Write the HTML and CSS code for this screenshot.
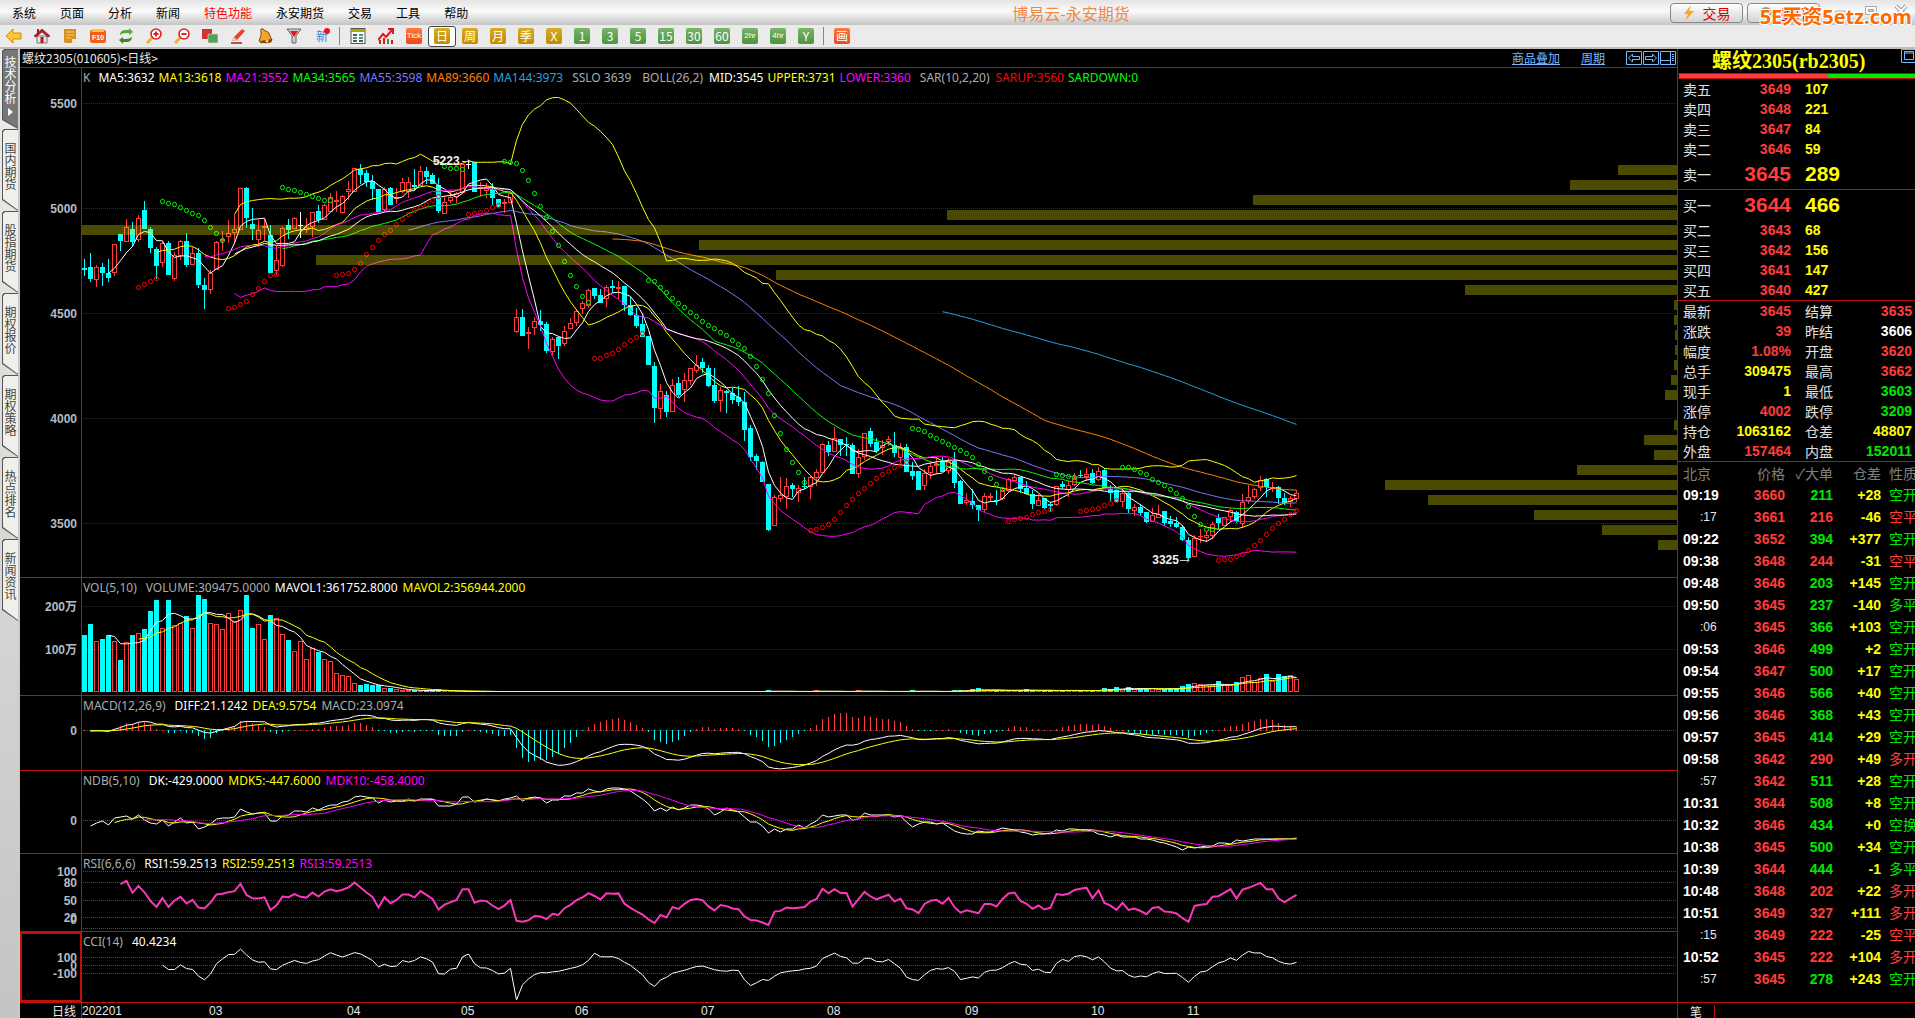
FILE: index.html
```html
<!DOCTYPE html>
<html lang="zh-CN">
<head>
    <meta charset="UTF-8">
    <meta name="viewport" content="width=device-width, initial-scale=1.0">
    <title>博易云-永安期货</title>
    <link rel="stylesheet" href="styles.css">
</head>
<body>
<div class="app">
    <header class="titlebar">
        <nav class="menu">
            <button>系统</button>
            <button>页面</button>
            <button>分析</button>
            <button>新闻</button>
            <button class="hot">特色功能</button>
            <button>永安期货</button>
            <button>交易</button>
            <button>工具</button>
            <button>帮助</button>
        </nav>
        <h1>博易云-永安期货</h1>
        <div class="title-actions">
            <button class="trade"><svg width="12" height="16" viewBox="0 0 12 16"><path d="M8 0L1 9h4L2 16 11 6H6z" fill="#f5a623"/></svg>交易</button>
            <button class="trade"><svg width="14" height="14" viewBox="0 0 14 14"><circle cx="7" cy="7" r="6" fill="#999"/></svg>委托</button>
            <div class="win-controls">
                <button aria-label="最小化"><svg width="14" height="14" viewBox="0 0 14 14"><rect x="2" y="7" width="9" height="4" fill="#fff" stroke="#aaa"/></svg></button>
                <button aria-label="最大化"><svg width="14" height="14" viewBox="0 0 14 14"><rect x="1.5" y="2.5" width="11" height="8" fill="#fff" stroke="#aaa"/><rect x="4.5" y="5.5" width="5" height="2" fill="#ccc" stroke="#aaa"/></svg></button>
                <button aria-label="关闭"><svg width="14" height="14" viewBox="0 0 14 14"><path d="M2 2l10 10M12 2L2 12" stroke="#999" stroke-width="4"/><path d="M2 2l10 10M12 2L2 12" stroke="#fff" stroke-width="2"/></svg></button>
            </div>
            <span class="watermark">5E天资5etz.com</span>
        </div>
    </header>

    <div class="toolbar">
        <button aria-label="后退"><svg viewBox="0 0 16 16"><path d="M0 8l7-7v4h8v6H7v4z" fill="#ffc830" stroke="#d08c10"/></svg></button>
        <button aria-label="首页"><svg viewBox="0 0 16 16"><path d="M3 8h10v7H3z" fill="#e8e4e0" stroke="#777"/><path d="M0 8l8-7 8 7-2 1-6-5-6 5z" fill="#c01828" stroke="#7a1018" stroke-width=".6"/><path d="M3 1h2v4L3 6z" fill="#a01820"/><path d="M6.500 9h3v6h-3z" fill="#b01828"/></svg></button>
        <button aria-label="笔记"><svg viewBox="0 0 16 16"><path d="M2 1h12v10l-4 4H3q-1.500-1-1-3z" fill="#d89020"/><path d="M10 15l4-4h-4z" fill="#fff0b0"/><path d="M4 4h8M4 7h8M4 10h5" stroke="#f6cc60"/></svg></button>
        <button aria-label="F10"><svg viewBox="0 0 16 16"><rect x="0" y="2" width="16" height="13" rx="2" fill="#f06018"/><path d="M2 1h12v3H2z" fill="#ffc040"/><text x="8" y="12" class="ico-text">F10</text></svg></button>
        <button aria-label="刷新"><svg viewBox="0 0 16 16"><path d="M2 7q0-5 6-5h3V0l4 4-4 3V5H8Q4 5 2 7z" fill="#58a838"/><path d="M14 9q0 5-6 5H5v2l-4-4 4-3v2h3q4 0 6-2z" fill="#388828"/></svg></button>
        <button aria-label="放大"><svg viewBox="0 0 16 16"><path d="M6 10l-5 5" stroke="#f0b020" stroke-width="3"/><circle cx="10" cy="6" r="5" fill="#fff" stroke="#e02020" stroke-width="1.600"/><path d="M7.500 6h5M10 3.500v5" stroke="#e02020" stroke-width="2"/></svg></button>
        <button aria-label="缩小"><svg viewBox="0 0 16 16"><path d="M6 10l-5 5" stroke="#f0b020" stroke-width="3"/><circle cx="10" cy="6" r="5" fill="#fff" stroke="#e02020" stroke-width="1.600"/><path d="M7.500 6h5" stroke="#e02020" stroke-width="2"/></svg></button>
        <button aria-label="叠加"><svg viewBox="0 0 16 16"><rect x="0" y="1" width="10" height="10" fill="#d83030"/><rect x="6" y="6" width="10" height="9" rx="1" fill="#58a058" stroke="#d8e8d8" stroke-width=".6"/></svg></button>
        <button aria-label="画线"><svg viewBox="0 0 16 16"><path d="M2 13l2-4 8-8 3 2-8 9z" fill="#f04028"/><path d="M2 13l2-4 3 3z" fill="#f8c898"/><path d="M1 15h11" stroke="#b01818" stroke-width="1.500"/></svg></button>
        <button aria-label="预警"><svg viewBox="0 0 16 16"><path d="M3 1q2-1 3 1 6 2 6 6l2 4-11 3-2-2q3-5 2-12z" fill="#f0a828" stroke="#884010"/><path d="M2 13l12-2q1 3-3 4-7 1-9-2z" fill="#884010"/><circle cx="9" cy="13" r="1.500" fill="#ffd860"/></svg></button>
        <button aria-label="筛选"><svg viewBox="0 0 16 16"><path d="M1 1h14l-5 7v7H6V8z" fill="#ccc" stroke="#666"/><path d="M4 3h8L8 9z" fill="#e81818"/></svg></button>
        <button aria-label="新" class="new"><span>新</span><svg viewBox="0 0 6 6"><circle cx="3" cy="3" r="3" fill="#f01010"/></svg></button>
        <i class="sep"></i>
        <button aria-label="报价"><svg viewBox="0 0 16 16"><rect x="1" y=".5" width="14" height="15" fill="#fff" stroke="#555"/><path d="M1 1h14v3H1z" fill="#b8a000"/><path d="M3 7h4M3 13h4M9 13h4" stroke="#222" stroke-width="1.500"/><path d="M9 7h4M3 10h4M9 10h4" stroke="#088040" stroke-width="1.500"/></svg></button>
        <button aria-label="走势"><svg viewBox="0 0 16 16"><path d="M1 16v-4h2v4zM5 16v-6h2v6z" fill="#d81818"/><path d="M9 16v-5h2v5z" fill="#28a028"/><path d="M13 16v-4h2v4z" fill="#d81818"/><path d="M0 12l5-6 3 3 6-7M10 1h5v5" fill="none" stroke="#e01818" stroke-width="2"/></svg></button>
        <button><span class="chip red tiny">Tick</span></button>
        <button class="selected"><span class="chip gold">日</span></button>
        <button><span class="chip gold">周</span></button>
        <button><span class="chip gold">月</span></button>
        <button><span class="chip gold">季</span></button>
        <button><span class="chip gold">X</span></button>
        <button><span class="chip green">1</span></button>
        <button><span class="chip green">3</span></button>
        <button><span class="chip green">5</span></button>
        <button><span class="chip green">15</span></button>
        <button><span class="chip green">30</span></button>
        <button><span class="chip green">60</span></button>
        <button><span class="chip green tiny">2hr</span></button>
        <button><span class="chip green tiny">4hr</span></button>
        <button><span class="chip green">Y</span></button>
        <i class="sep"></i>
        <button><span class="chip red">画</span></button>
    </div>

    <div class="workspace">
        <nav class="side-tabs">
            <button class="active"><span>技术分析</span><svg width="5" height="8" viewBox="0 0 5 8"><path d="M0 0l5 4-5 4z" fill="#fff"/></svg></button>
            <button><span>国内期货</span></button>
            <button><span>股指期货</span></button>
            <button><span>期权报价</span></button>
            <button><span>期权策略</span></button>
            <button><span>热点排名</span></button>
            <button><span>新闻资讯</span></button>
        </nav>

        <main class="charts">
            <div class="chart-head">
                <span>螺纹2305(010605)&lt;日线&gt;</span>
                <div class="chart-links">
                    <a href="#overlay">商品叠加</a>
                    <a href="#period">周期</a>
                    <div class="nav-boxes">
                        <button aria-label="向左"><svg width="16" height="14" viewBox="0 0 16 14"><path d="M.5.5h15v13H.5zM2.500 7l4-4v2.500h7v3h-7V11z"/></svg></button>
                        <button aria-label="向右"><svg width="16" height="14" viewBox="0 0 16 14"><path d="M.5.5h15v13H.5zM13.500 7l-4-4v2.500h-7v3h7V11z"/></svg></button>
                        <button aria-label="布局"><svg width="16" height="14" viewBox="0 0 16 14"><path d="M.5.5h15v13H.5zM10.500.5v13M.5 9.500h10M12 3.500h2M12 5.500h2M12 7.500h2M12 9.500h2"/></svg></button>
                    </div>
                </div>
            </div>

            <section class="panel">
                <svg class="axis" id="axis-main"></svg>
                <div class="view">
                    <svg class="plot" id="plot-main"></svg>
                    <p class="legend tight"><span class="grey first">K</span><span class="white">MA5:3632</span><span class="yellow">MA13:3618</span><span class="magenta">MA21:3552</span><span class="green">MA34:3565</span><span class="violet">MA55:3598</span><span class="orange">MA89:3660</span><span class="blue">MA144:3973</span><span class="grey group">SSLO 3639</span><span class="grey group">BOLL(26,2)</span><span class="white">MID:3545</span><span class="yellow">UPPER:3731</span><span class="magenta">LOWER:3360</span><span class="grey group">SAR(10,2,20)</span><span class="red">SARUP:3560</span><span class="green">SARDOWN:0</span></p>
                </div>
            </section>
            <section class="panel">
                <svg class="axis" id="axis-vol"></svg>
                <div class="view">
                    <svg class="plot" id="plot-vol"></svg>
                    <p class="legend"><span class="grey first">VOL(5,10)</span><span class="grey">VOLUME:309475.0000</span><span class="white">MAVOL1:361752.8000</span><span class="yellow">MAVOL2:356944.2000</span></p>
                </div>
            </section>
            <section class="panel">
                <svg class="axis" id="axis-macd"></svg>
                <div class="view">
                    <svg class="plot" id="plot-macd"></svg>
                    <p class="legend"><span class="grey first">MACD(12,26,9)</span><span class="white">DIFF:21.1242</span><span class="yellow">DEA:9.5754</span><span class="grey">MACD:23.0974</span></p>
                </div>
            </section>
            <section class="panel">
                <svg class="axis" id="axis-ndb"></svg>
                <div class="view">
                    <svg class="plot" id="plot-ndb"></svg>
                    <p class="legend"><span class="grey first">NDB(5,10)</span><span class="white">DK:-429.0000</span><span class="yellow">MDK5:-447.6000</span><span class="magenta">MDK10:-458.4000</span></p>
                </div>
            </section>
            <section class="panel">
                <svg class="axis" id="axis-rsi"></svg>
                <div class="view">
                    <svg class="plot" id="plot-rsi"></svg>
                    <p class="legend"><span class="grey first">RSI(6,6,6)</span><span class="white">RSI1:59.2513</span><span class="yellow">RSI2:59.2513</span><span class="magenta">RSI3:59.2513</span></p>
                </div>
            </section>
            <section class="panel focused">
                <svg class="axis" id="axis-cci"></svg>
                <div class="view">
                    <svg class="plot" id="plot-cci"></svg>
                    <p class="legend"><span class="grey first">CCI(14)</span><span class="white">40.4234</span></p>
                </div>
            </section>
            <section class="panel time">
                <span class="period">日线</span>
                <svg class="plot" id="plot-time"></svg>
            </section>
        </main>

        <aside class="quote">
            <div class="quote-head">
                <h2>螺纹2305(rb2305)</h2>
                <button aria-label="窗口"><svg width="16" height="14" viewBox="0 0 16 14"><path d="M.5.5h15v13H.5zM3.500 2.500h9v8h-9zM3.500 4h9"/></svg></button>
            </div>
            <div class="ratio"><i></i></div>
            <table class="book">
                <tbody>
                    <tr><th>卖五</th><td class="up">3649</td><td class="yellow">107</td></tr>
                    <tr><th>卖四</th><td class="up">3648</td><td class="yellow">221</td></tr>
                    <tr><th>卖三</th><td class="up">3647</td><td class="yellow">84</td></tr>
                    <tr><th>卖二</th><td class="up">3646</td><td class="yellow">59</td></tr>
                    <tr class="best"><th>卖一</th><td class="up">3645</td><td class="yellow">289</td></tr>
                </tbody>
            </table>
            <table class="book">
                <tbody>
                    <tr class="best"><th>买一</th><td class="up">3644</td><td class="yellow">466</td></tr>
                    <tr><th>买二</th><td class="up">3643</td><td class="yellow">68</td></tr>
                    <tr><th>买三</th><td class="up">3642</td><td class="yellow">156</td></tr>
                    <tr><th>买四</th><td class="up">3641</td><td class="yellow">147</td></tr>
                    <tr><th>买五</th><td class="up">3640</td><td class="yellow">427</td></tr>
                </tbody>
            </table>
            <table class="stats">
                <tbody>
                    <tr><th>最新</th><td class="up">3645</td><th>结算</th><td class="up">3635</td></tr>
                    <tr><th>涨跌</th><td class="up">39</td><th>昨结</th><td class="white">3606</td></tr>
                    <tr><th>幅度</th><td class="up">1.08%</td><th>开盘</th><td class="up">3620</td></tr>
                    <tr><th>总手</th><td class="yellow">309475</td><th>最高</th><td class="up">3662</td></tr>
                    <tr><th>现手</th><td class="yellow">1</td><th>最低</th><td class="down">3603</td></tr>
                    <tr><th>涨停</th><td class="up">4002</td><th>跌停</th><td class="down">3209</td></tr>
                    <tr><th>持仓</th><td class="yellow">1063162</td><th>仓差</th><td class="yellow">48807</td></tr>
                    <tr><th>外盘</th><td class="up">157464</td><th>内盘</th><td class="down">152011</td></tr>
                </tbody>
            </table>
            <div class="trades-wrap">
                <table class="trades">
                    <thead>
                        <tr><th>北京</th><th>价格</th><th>✓大单</th><th>仓差</th><th>性质</th></tr>
                    </thead>
                    <tbody id="trades"></tbody>
                </table>
            </div>
            <div class="quote-tabs"><button>笔</button></div>
        </aside>
    </div>
</div>
<script src="chart.js"></script>
</body>
</html>
```

FILE: styles.css
```css
* {
    box-sizing: border-box;
}
body {
    margin: 0;
    background: #000;
    color: #e8e8e8;
    font-family: "Noto Sans CJK SC", "Liberation Sans", sans-serif;
    font-size: 12px;
}
button {
    margin: 0;
    padding: 0;
    border: 0;
    background: none;
    color: inherit;
    font: inherit;
    cursor: pointer;
}
h1, h2, p {
    margin: 0;
}
.app {
    display: flex;
    flex-direction: column;
    height: 100vh;
    min-height: 700px;
    overflow: hidden;
}

/* title bar */
.titlebar {
    display: flex;
    align-items: center;
    flex: none;
    height: 25px;
    background: linear-gradient(#e4e4e4, #fafafa 45%, #c4c4c4);
    color: #000;
}
.menu {
    display: flex;
    gap: 24px;
    padding-left: 12px;
}
.menu .hot {
    color: #f00;
}
.titlebar h1 {
    flex: 1;
    padding-left: 4px;
    text-align: center;
    font-size: 16px;
    font-weight: normal;
    line-height: 24px;
    color: #f08848;
}
.title-actions {
    display: flex;
    align-items: center;
    gap: 4px;
    position: relative;
    width: 245px;
}
.trade {
    display: flex;
    align-items: center;
    justify-content: center;
    gap: 8px;
    width: 73px;
    height: 20px;
    border: 1px solid #888;
    border-radius: 4px;
    background: linear-gradient(#fff, #d4d4d4);
    color: #d80000;
    font-size: 14px;
    line-height: 18px;
}
.win-controls {
    display: flex;
    gap: 16px;
    padding: 0 0 4px 10px;
}
.win-controls button {
    height: 14px;
}
.watermark {
    position: absolute;
    right: 3px;
    top: 0;
    color: #ff6a00;
    font-family: "Open Sans", "Noto Sans CJK SC", sans-serif;
    font-size: 20px;
    font-weight: bold;
    line-height: 28px;
    text-shadow: 1px 1px #fff, -1px -1px #fff, 1px -1px #fff, -1px 1px #fff;
}

/* toolbar */
.toolbar {
    display: flex;
    align-items: center;
    flex: none;
    height: 24px;
    background: #ebebeb;
    border-bottom: 2px solid #c0bcbc;
}
.toolbar button {
    display: flex;
    align-items: center;
    justify-content: center;
    width: 28px;
    height: 21px;
}
.toolbar svg {
    width: 16px;
    height: 16px;
}
.toolbar .selected {
    border: 1px solid #444;
    border-radius: 3px;
    background: #fff;
}
.ico-text {
    fill: #fff;
    font: bold 7px "Liberation Sans", sans-serif;
    text-anchor: middle;
}
.toolbar .new {
    position: relative;
    color: #3888e0;
    line-height: 20px;
}
.toolbar .new svg {
    position: absolute;
    top: 2px;
    right: 6px;
    width: 6px;
    height: 6px;
}
.sep {
    width: 5px;
    height: 18px;
    margin-left: 3px;
    border-left: 1px solid #888;
}
.chip {
    width: 16px;
    height: 16px;
    border-radius: 2px;
    color: #fff;
    font-size: 12px;
    line-height: 16px;
    text-align: center;
}
.chip.tiny {
    font-family: "Liberation Sans", sans-serif;
    font-size: 8px;
}
.gold { background: linear-gradient(#d8ac28, #c08c00); }
.chip.green { background: linear-gradient(#78b468, #4c9440); color: #fff; }
.chip.red { background: linear-gradient(#ff7840, #f04818); color: #fff; }

/* workspace */
.workspace {
    display: flex;
    flex: 1;
    min-height: 0;
}
.side-tabs {
    flex: none;
    width: 20px;
    padding-left: 2px;
    border-right: 2px solid #d0c8c4;
    background: linear-gradient(#ececec, #c4c4c4);
}
.side-tabs button {
    display: flex;
    flex-direction: column;
    align-items: center;
    gap: 4px;
    position: relative;
    width: 16px;
    height: 82px;
    padding-top: 13px;
    background: #555;
    clip-path: polygon(0 2px, 2px 0, 100% 0, 100% 100%, 0 71px);
    color: #444;
    line-height: 16px;
}
.side-tabs button::before {
    content: "";
    position: absolute;
    inset: 1px 0 1px 1px;
    background: #f0f0ea;
    clip-path: polygon(0 2px, 2px 0, 100% 0, 100% 100%, 0 69px);
}
.side-tabs .active {
    height: 80px;
    padding-top: 7px;
    color: #fff;
}
.side-tabs .active::before {
    background: #777;
}
.side-tabs span,
.side-tabs svg {
    position: relative;
}
.side-tabs span {
    writing-mode: vertical-rl;
}

.charts {
    display: grid;
    flex: 1;
    min-width: 0;
    grid-template-rows:
        19px
        minmax(0, 510fr)
        minmax(0, 118fr)
        minmax(0, 75fr)
        minmax(0, 83fr)
        minmax(0, 78fr)
        minmax(0, 71fr)
        15px;
}
.chart-head {
    display: flex;
    justify-content: space-between;
    align-items: center;
    padding-left: 2px;
    border-bottom: 1px solid #c01008;
    line-height: 18px;
}
.chart-links {
    display: flex;
    align-items: center;
    gap: 21px;
}
.chart-links a {
    color: #78b8ff;
}
.nav-boxes {
    display: flex;
    gap: 1px;
    padding-right: 1px;
}
.nav-boxes button {
    height: 14px;
}
.nav-boxes path,
.quote-head path {
    fill: none;
    stroke: #78b8ff;
}
.panel {
    display: grid;
    grid-template-columns: 62px minmax(0, 1fr);
    grid-template-rows: minmax(0, 1fr);
    border-bottom: 1px solid #c01008;
}
.axis {
    width: 100%;
    height: 100%;
    border-right: 1px solid #c01008;
    fill: #b4bcc4;
    font: bold 12px "Liberation Sans", "Noto Sans CJK SC", sans-serif;
    text-anchor: end;
}
.focused .axis {
    outline: 2px solid #c01008;
    outline-offset: -2px;
}
.view {
    display: grid;
    grid-template-rows: minmax(0, 1fr);
}
.view > * {
    grid-area: 1 / 1;
}
.plot {
    display: block;
    width: 100%;
    height: 100%;
}
.legend {
    display: flex;
    gap: 5px;
    align-self: start;
    padding-left: 1px;
    z-index: 1;
    font-family: "Noto Sans", sans-serif;
    line-height: 19px;
    white-space: pre;
}
.legend.tight {
    gap: 4px;
}
.legend .first {
    padding-right: 4px;
}
.legend .group {
    padding: 0 2px 0 5px;
}
.grey { color: #a8acb0; }
.white { color: #fff; }
.yellow { color: #ff0; }
.magenta { color: #f0f; }
.green { color: #0f0; }
.violet { color: #7878ff; }
.orange { color: #ff8000; }
.blue { color: #28a0e0; }
.red { color: #f00; }
.up { color: #ff3c3c; }
.down { color: #00e800; }

.time {
    border-bottom: 0;
    line-height: 15px;
}
.period {
    padding-right: 5px;
    border-right: 1px solid #c01008;
    text-align: right;
}
.time text {
    fill: #e8e8e8;
    font: 12px "Liberation Sans", sans-serif;
}

/* shapes in the plots */
.line {
    fill: none;
    stroke-width: 1;
    vector-effect: non-scaling-stroke;
}
.line.bold {
    stroke-width: 2;
}
.grid {
    stroke: #900;
    stroke-dasharray: 1 1;
    shape-rendering: crispEdges;
}
.grid.bright {
    stroke: #d01008;
}
.bar {
    shape-rendering: crispEdges;
}
.profile {
    fill: #ff0;
    fill-opacity: 0.29;
}
.mark {
    fill: #f0f0f0;
    font: bold 12px "Liberation Sans", sans-serif;
}

/* quote panel */
.quote {
    display: flex;
    flex-direction: column;
    flex: none;
    width: 238px;
    border-left: 1px solid #c01008;
    overflow: hidden;
}
.quote-head {
    display: flex;
    flex: none;
    justify-content: space-between;
    height: 25px;
    padding-left: 34px;
    border-bottom: 1px solid #c01008;
}
.quote-head h2 {
    color: #ff0;
    font: bold 20px/24px "Liberation Serif", "Noto Sans CJK SC", serif;
    white-space: nowrap;
}
.quote-head button {
    flex: none;
    width: 14px;
    height: 16px;
    overflow: hidden;
}
.ratio {
    flex: none;
    height: 5px;
    border-bottom: 1px solid #c01008;
    border-left: 1px solid #000;
    background: #00e800;
}
.ratio i {
    display: block;
    width: 63%;
    height: 4px;
    background: #ff3c3c;
}
.quote table {
    table-layout: fixed;
    width: 100%;
    border-collapse: collapse;
}
.quote tr {
    height: 20px;
}
.quote th,
.quote td {
    padding: 0;
    white-space: nowrap;
    line-height: 20px;
}
.quote th {
    color: #e0e0e0;
    font-size: 14px;
    font-weight: normal;
    text-align: left;
}
.quote td {
    font-family: "Liberation Sans", "Noto Sans CJK SC", sans-serif;
    font-size: 14px;
    font-weight: bold;
    text-align: right;
}
.book {
    border-bottom: 1px solid #c01008;
}
.book th {
    width: 50px;
    padding-left: 5px;
}
.book td:nth-child(2) {
    width: 63px;
}
.book td:nth-child(3) {
    padding-left: 14px;
    text-align: left;
}
.quote .best {
    height: 30px;
}
.book .best td {
    font-size: 21px;
}
.stats {
    border-bottom: 1px solid #c01008;
}
.stats th:nth-child(1) {
    width: 40px;
    padding-left: 5px;
}
.stats td:nth-child(2) {
    width: 73px;
}
.stats th:nth-child(3) {
    width: 50px;
    padding-left: 14px;
}
.stats td:nth-child(4) {
    padding-right: 3px;
}
.trades-wrap {
    flex: 1;
    min-height: 0;
    overflow: hidden;
}
.trades tr {
    height: 22px;
}
.quote .trades th {
    color: #808080;
    text-align: right;
}
.quote .trades th:nth-child(1),
.quote .trades td:nth-child(1) {
    width: 50px;
    padding-left: 5px;
    text-align: left;
}
.trades th:nth-child(2) { width: 57px; }
.trades th:nth-child(3) { width: 48px; }
.trades th:nth-child(4) { width: 48px; }
.quote .trades th:nth-child(5),
.quote .trades td:nth-child(5) {
    padding-left: 8px;
    text-align: left;
    font-weight: normal;
}
.quote .trades td.sec {
    padding-left: 22px;
    font-size: 12px;
    font-weight: normal;
}
.quote-tabs {
    flex: none;
    height: 16px;
    border-top: 1px solid #c01008;
}
.quote-tabs button {
    width: 37px;
    height: 15px;
    margin-top: -1px;
    border: 1px solid #c01008;
    border-top-color: #000;
    border-left: 0;
    border-radius: 0 0 3px 3px;
    line-height: 12px;
}
```

FILE: chart.js
```javascript
const NS = 'http://www.w3.org/2000/svg';
const WIDTH = 1595;
const STEP = 6;
const RED = '#ff3c3c';
const CYAN = '#00ffff';

// daily bars in chart units: open, close, high, low
const bars = [
    [200,202,191,208],[199,211,185,214],[212,199,197,219],[199,205,195,218],[205,210,191,214],
    [205,176,176,208],[166,173,166,183],[174,159,151,174],[161,174,154,179],[172,150,147,174],
    [142,161,133,161],[161,180,159,185],[181,198,179,211],[195,175,174,199],[175,207,173,207],
    [211,187,184,213],[188,173,172,192],[173,197,165,199],[197,185,179,197],[185,217,180,220],
    [217,222,210,241],[222,205,202,226],[202,174,173,202],[173,171,163,183],[169,165,152,175],
    [165,161,147,174],[162,120,120,162],[120,150,119,160],[156,161,140,172],[172,162,152,179],
    [160,158,152,173],[167,205,157,205],[203,192,178,207],[198,160,159,199],[157,162,151,171],
    [161,150,149,161],[157,157,144,170],[162,159,150,165],[159,144,144,169],[143,152,137,155],
    [152,137,136,152],[144,129,125,144],[134,132,123,144],[145,128,127,146],[124,121,113,132],
    [124,100,100,124],[101,107,96,116],[105,114,102,119],[113,121,107,132],[121,144,121,144],
    [142,121,119,144],[120,137,119,137],[131,129,120,136],[124,114,110,125],[124,114,109,130],
    [117,119,101,122],[118,103,98,118],[103,109,99,116],[107,116,105,116],[117,143,110,145],
    [146,134,128,146],[133,129,122,135],[129,125,124,135],[125,96,96,125],[96,96,92,101],
    [94,124,94,124],[121,119,114,129],[123,120,115,130],[121,130,115,137],[131,139,131,139],
    [136,134,131,145],[135,125,125,135],[264,249,241,265],[249,268,241,268],[266,264,259,281],
    [260,253,249,267],[253,257,242,263],[256,283,254,285],[284,271,269,287],[269,278,269,291],
    [276,263,258,278],[261,255,250,261],[255,243,241,258],[241,235,233,246],[238,222,221,240],
    [220,228,220,231],[227,235,221,235],[231,219,217,239],[218,220,212,225],[221,219,213,231],
    [218,237,218,243],[237,247,229,248],[247,258,240,260],[256,269,247,269],[268,297,268,297],
    [298,340,294,355],[341,323,316,351],[327,344,323,349],[344,317,311,344],[315,327,309,329],
    [322,312,305,334],[313,300,300,317],[303,297,287,305],[294,300,290,305],[300,318,297,319],
    [317,333,300,335],[333,322,319,344],[323,325,322,345],[325,332,320,336],[329,334,318,338],
    [334,362,324,373],[360,389,357,393],[388,393,386,402],[394,414,393,414],[416,462,416,463],
    [458,429,427,458],[431,427,409,434],[429,418,410,441],[417,421,415,429],[425,420,417,434],
    [418,419,409,421],[419,409,408,431],[410,404,401,418],[405,376,375,405],[377,384,373,388],
    [384,370,359,384],[371,377,371,388],[376,377,369,388],[377,406,375,406],[406,389,381,410],
    [389,365,365,392],[363,376,360,379],[374,383,370,385],[380,377,372,387],[374,371,368,378],
    [377,385,364,389],[390,379,375,395],[379,404,376,404],[403,408,394,412],[403,422,403,422],
    [418,405,401,422],[405,398,394,411],[398,396,389,406],[393,404,389,404],[403,393,390,406],
    [393,415,384,420],[413,436,412,436],[435,432,425,437],[433,437,421,441],[437,442,437,453],
    [442,428,425,444],[430,428,425,434],[432,433,422,437],[431,422,420,432],[423,411,410,424],
    [413,409,406,413],[409,421,409,425],[420,426,413,426],[426,436,422,441],[438,432,426,438],
    [430,440,430,441],[436,438,434,444],[437,418,418,438],[416,419,413,421],[422,417,413,429],
    [417,410,405,418],[407,408,402,410],[409,406,400,413],[405,415,401,416],[412,403,399,413],
    [402,420,400,420],[421,425,417,433],[422,434,421,434],[434,425,422,439],[425,441,424,445],
    [443,439,436,448],[439,445,436,448],[444,454,444,455],[454,447,440,454],[450,446,437,450],
    [443,455,443,458],[453,456,448,459],[455,459,449,460],[459,472,457,473],[472,490,469,492],
    [489,470,467,489],[469,468,461,475],[470,467,464,474],[468,456,454,471],[450,455,446,461],
    [458,449,449,458],[449,442,440,454],[444,453,443,455],[456,434,426,460],[433,429,417,436],
    [429,421,420,431],[420,412,408,423],[411,419,410,429],[421,419,414,424],[419,430,418,436],
    [430,435,425,437],[434,430,428,439],[431,425,422,434]
];

// bar heights of the volume panel
const volume = [
    57,68,51,53,57,51,32,50,57,59,63,81,92,64,92,67,69,76,64,97,93,69,68,63,79,71,82,97,64,68,
    53,77,74,58,52,41,51,33,44,40,33,31,19,17,16,9,7,8,7,7,4,4,3,2,2,2,2,2,2,3
];
while (volume.length < 148) volume.push(1);
[114, 122, 129, 138, 145, 146, 147].forEach(i => { volume[i] = 2; });
volume.push(
    3,4,2,2,2,2,2,2,2,3,2,2,2,2,2,2,2,2,2,2,2,2,
    4,3,5,3,5,3,4,4,4,3,3,4,4,
    6,8,9,8,7,7,11,7,7,10,15,17,10,14,18,11,18,16,17,13
);

// DK line, first value belongs to the second bar
const dk = [
    55,52,50,54,47,46,45,48,44,49,52,53,49,55,51,47,52,51,58,56,53,48,47,47,46,38,41,43,42,42,
    50,50,45,44,40,40,41,37,39,36,34,34,31,30,26,25,26,27,32,29,31,30,30,28,30,28,28,28,35,35,
    35,33,26,26,31,30,28,29,30,28,27,25,30,27,26,27,32,29,29,25,25,22,22,18,20,21,18,17,17,18,
    20,24,28,33,40,37,40,36,39,37,34,34,35,38,44,41,37,39,41,46,51,51,55,62,58,61,58,58,54,57,
    53,50,44,46,45,44,44,49,48,42,44,44,44,44,46,45,51,56,53,51,51,53,52,56,60,62,63,63,60,61,
    61,59,57,58,59,61,62,64,63,63,62,59,60,58,58,59,59,60,63,64,66,64,66,66,66,68,68,69,71,72,
    74,76,79,76,77,76,75,75,72,72,73,69,70,69,68,68,68,68,68,68,68,67
];

// SAR dots: index of the first bar, colour, heights
const sar = [
    [9, '#f00', [219,216,213,210]],
    [13, '#0f0', [133,135,136,139,142,145,147,152,159,165,172]],
    [24, '#f00', [240,239,236,233,226,220,213,207,206]],
    [33, '#0f0', [119,121,122,124,126,128,130,132,132]],
    [42, '#f00', [207,206,205,201,195,186,179,172,166,162,156,151,146,142,139,136,132,128]],
    [60, '#0f0', [98,100,100,101]],
    [64, '#f00', [146,145,144,142,139,137]],
    [70, '#0f0', [93,94,95,102,112,125,138,149,163,177,193,207,218,228,234]],
    [85, '#f00', [290,290,287,285,281,276,272,269,265]],
    [94, '#0f0', [212,213,219,224,230,235,239,244,248,253,257,260,264,267,272,276,280,288,298,311,325,347,365,381,394,404,414]],
    [121, '#f00', [462,461,459,456,451,444,437,431,425,420,415,410,406,403,399,397,394]],
    [138, '#0f0', [360,361,363,367,370,373,376,379,382,385,389,396,403,410,416,421]],
    [154, '#f00', [453,451,450,449,446,444,443,441]],
    [162, '#0f0', [406,407,408,409]],
    [166, '#f00', [443,442,441,440,437,435,432]],
    [173, '#0f0', [399,399,401,404,406,411,414,417,421,425,430,438,448,456,461,461]],
    [189, '#f00', [492,491,491,488,486,482,477,472,466,460,455,451,446,442]]
];

// volume by price: top, length
const profile = [
    [97,59],[112,107],[127,424],[142,730],[157,1595],[172,978],[187,1361],[202,901],[217,212],
    [232,3],[247,3],[262,2],[277,2],[292,3],[307,6],[322,12],[352,3],[367,33],[382,23],[397,100],
    [412,292],[427,249],[442,143],[457,75],[472,19]
];

const trades = [
    ['09:19', 3660, 211, '+28', '空开'], [':17', 3661, 216, '-46', '空平'],
    ['09:22', 3652, 394, '+377', '空开'], ['09:38', 3648, 244, '-31', '空平'],
    ['09:48', 3646, 203, '+145', '空开'], ['09:50', 3645, 237, '-140', '多平'],
    [':06', 3645, 366, '+103', '空开'], ['09:53', 3646, 499, '+2', '空开'],
    ['09:54', 3647, 500, '+17', '空开'], ['09:55', 3646, 566, '+40', '空开'],
    ['09:56', 3646, 368, '+43', '空开'], ['09:57', 3645, 414, '+29', '空开'],
    ['09:58', 3642, 290, '+49', '多开'], [':57', 3642, 511, '+28', '空开'],
    ['10:31', 3644, 508, '+8', '空开'], ['10:32', 3646, 434, '+0', '空换'],
    ['10:38', 3645, 500, '+34', '空开'], ['10:39', 3644, 444, '-1', '多平'],
    ['10:48', 3648, 202, '+22', '多开'], ['10:51', 3649, 327, '+111', '多开'],
    [':15', 3649, 222, '-25', '空平'], ['10:52', 3645, 222, '+104', '多开'],
    [':57', 3645, 278, '+243', '空开']
];

function add(parent, name, attrs, text) {
    const el = document.createElementNS(NS, name);
    for (const key in attrs) el.setAttribute(key, attrs[key]);
    if (text !== undefined) el.textContent = text;
    parent.appendChild(el);
    return el;
}

function canvas(id, height) {
    return add(document.getElementById(id), 'svg', {
        width: '100%', height: '100%', viewBox: `0 0 ${WIDTH} ${height}`, preserveAspectRatio: 'none'
    });
}

function axis(id, height, labels) {
    const svg = document.getElementById(id);
    labels.forEach(([y, text]) => {
        add(svg, 'text', { x: 57, y: (y / height * 100) + '%', dy: '4' }, text);
    });
}

function grid(svg, rows, bright) {
    rows.forEach(y => {
        add(svg, 'line', { x1: 1, x2: WIDTH, y1: y, y2: y, class: bright ? 'grid bright' : 'grid' });
    });
}

function line(svg, values, color, cls = 'line') {
    const points = [];
    values.forEach((v, i) => {
        if (v !== null) points.push(`${i * STEP + 2.5},${v.toFixed(1)}`);
    });
    add(svg, 'polyline', { points: points.join(' '), stroke: color, class: cls });
}

function ma(values, n) {
    return values.map((v, i) => {
        if (i < n - 1 || values[i - n + 1] === null) return null;
        return values.slice(i - n + 1, i + 1).reduce((a, b) => a + b, 0) / n;
    });
}

function ema(values, n) {
    let last = values[0];
    return values.map(v => (last = last + (v - last) * 2 / (n + 1)));
}

const closes = bars.map(b => b[1]);
const price = y => 5500 - (y - 35.5) / 0.21;

function drawMain() {
    const svg = canvas('plot-main', 509);
    grid(svg, [35.5, 140.5, 245.5, 350.5, 455.5]);

    bars.forEach(([open, close, high, low], i) => {
        const x = i * STEP;
        const top = Math.min(open, close);
        const size = Math.abs(open - close);
        const color = open === close ? '#fff' : close > open ? CYAN : RED;
        if (high < top) add(svg, 'rect', { x: x + 2, y: high, width: 1, height: top - high, fill: color, class: 'bar' });
        if (low > top + size) add(svg, 'rect', { x: x + 2, y: top + size, width: 1, height: low - top - size, fill: color, class: 'bar' });
        if (close > open) {
            add(svg, 'rect', { x: x, y: top, width: 5, height: size, fill: CYAN, class: 'bar' });
        } else if (size > 1) {
            add(svg, 'rect', { x: x + 0.5, y: top + 0.5, width: 4, height: size - 1, fill: 'none', stroke: color, class: 'bar' });
        } else {
            add(svg, 'rect', { x: x, y: top, width: 5, height: 1, fill: color, class: 'bar' });
        }
    });

    const mid = ma(closes, 26);
    const dev = mid.map((m, i) => {
        if (m === null) return null;
        const part = closes.slice(i - 25, i + 1);
        return Math.sqrt(part.reduce((a, c) => a + (c - m) * (c - m), 0) / 26);
    });
    line(svg, ma(closes, 5), '#fff');
    line(svg, ma(closes, 13), '#ff0');
    line(svg, ma(closes, 21), '#f0f');
    line(svg, ma(closes, 34), '#0f0');
    line(svg, ma(closes, 55), '#7878ff');
    line(svg, ma(closes, 89), '#ff8000');
    line(svg, ma(closes, 144), '#28a0e0');
    line(svg, mid, '#fff');
    line(svg, mid.map((m, i) => m === null ? null : m - 2 * dev[i]), '#ff0');
    line(svg, mid.map((m, i) => m === null ? null : m + 2 * dev[i]), '#f0f');

    sar.forEach(([start, color, dots]) => {
        dots.forEach((y, k) => {
            add(svg, 'ellipse', { cx: (start + k) * STEP + 2.5, cy: y + 0.5, rx: 2, ry: 2.2, stroke: color, class: 'line' });
        });
    });
    profile.forEach(([y, w]) => {
        add(svg, 'rect', { x: WIDTH - w, y: y, width: w, height: 10, class: 'profile' });
    });

    // highest and lowest price
    add(svg, 'path', { d: 'M380 93.500h8M386 91.500l2 2-2 2M1098 492.500h9M1105 490.500l2 2-2 2', stroke: '#ccc', class: 'line' });
    const outer = document.getElementById('plot-main');
    add(outer, 'text', { x: '22%', y: '19.1%', class: 'mark' }, '5223');
    add(outer, 'text', { x: '67.1%', y: '97.4%', class: 'mark' }, '3325');
    axis('axis-main', 509, [[35.5, 5500], [140.5, 5000], [245.5, 4500], [350.5, 4000], [455.5, 3500]]);
}

function drawVolume() {
    const svg = canvas('plot-vol', 117);
    const base = 114;
    grid(svg, [28.5, 71.5]);
    volume.forEach((h, i) => {
        const down = bars[i][1] > bars[i][0];
        if (down || h < 3) {
            add(svg, 'rect', { x: i * STEP, y: base - h, width: 5, height: h, fill: down ? CYAN : RED, class: 'bar' });
        } else {
            add(svg, 'rect', { x: i * STEP + 0.5, y: base - h + 0.5, width: 4, height: h - 1, fill: 'none', stroke: RED, class: 'bar' });
        }
    });
    line(svg, ma(volume, 5).map(v => v === null ? null : base - v + 0.5), '#fff');
    line(svg, ma(volume, 10).map(v => v === null ? null : base - v + 0.5), '#ff0');
    axis('axis-vol', 117, [[28.5, '200万'], [71.5, '100万']]);
}

function drawMacd() {
    const svg = canvas('plot-macd', 74);
    const zero = 34.5;
    const scale = 0.185;
    const values = closes.map(price);
    const slow = ema(values, 26);
    const diff = ema(values, 12).map((v, i) => v - slow[i]);
    const dea = ema(diff, 9);
    grid(svg, [zero], true);
    diff.forEach((d, i) => {
        const h = Math.max(1, Math.round(Math.abs(d - dea[i]) * 2 * scale));
        const up = d >= dea[i];
        add(svg, 'rect', { x: i * STEP + 2, y: up ? 35 - h : 34, width: 1, height: h, fill: up ? RED : CYAN, class: 'bar' });
    });
    line(svg, diff.map((v, i) => i < 1 ? null : zero - v * scale), '#fff');
    line(svg, dea.map((v, i) => i < 1 ? null : zero - v * scale), '#ff0');
    axis('axis-macd', 74, [[34.5, 0]]);
}

function drawNdb() {
    const svg = canvas('plot-ndb', 82);
    const values = [null].concat(dk);
    grid(svg, [49.5], true);
    line(svg, values, '#fff');
    line(svg, ma(values, 5), '#ff0');
    line(svg, ma(values, 10), '#f0f');
    axis('axis-ndb', 82, [[49.5, 0]]);
}

function drawRsi() {
    const svg = canvas('plot-rsi', 77);
    let gain = 0;
    let total = 0;
    const rsi = closes.map((c, i) => {
        if (i === 0) return null;
        const move = closes[i - 1] - c;
        gain = (Math.max(move, 0) + gain * 5) / 6;
        total = (Math.abs(move) + total * 5) / 6;
        return i < 6 ? null : 74.5 - gain / total * 57;
    });
    grid(svg, [17.5, 28.5, 46.5, 63.5, 74.5], true);
    line(svg, rsi, '#f838b8', 'line bold');
    axis('axis-rsi', 77, [[18, 100], [28.5, 80], [46.5, 50], [63.5, 20], [65.5, 0]]);
}

function drawCci() {
    const svg = canvas('plot-cci', 70);
    const typical = bars.map(b => price((b[1] + b[2] + b[3]) / 3));
    const mean = ma(typical, 14);
    const cci = mean.map((m, i) => {
        if (m === null) return null;
        const dev = typical.slice(i - 13, i + 1).reduce((a, t) => a + Math.abs(t - m), 0) / 14;
        return 33.5 - (typical[i] - m) / (0.015 * dev) * 0.08;
    });
    grid(svg, [25.5, 33.5, 41.5], true);
    line(svg, cci, '#fff');
    axis('axis-cci', 70, [[25.5, 100], [33.5, 0], [41.5, -100]]);
}

function drawTime() {
    const svg = document.getElementById('plot-time');
    const months = [[0, '202201'], [127, '03'], [265, '04'], [379, '05'], [493, '06'], [619, '07'], [745, '08'], [883, '09'], [1009, '10'], [1105, '11']];
    months.forEach(([x, text]) => {
        add(svg, 'text', { x: (x / WIDTH * 100) + '%', y: 12 }, text);
    });
}

function fillTrades() {
    const body = document.getElementById('trades');
    trades.forEach(([time, value, lots, change, kind]) => {
        const row = body.insertRow();
        const color = kind === '空平' || kind === '多开' ? 'up' : 'down';
        [[time, time[0] === ':' ? 'sec' : 'white'], [value, 'up'], [lots, color], [change, 'yellow'], [kind, color]].forEach(([text, cls]) => {
            const cell = row.insertCell();
            cell.textContent = text;
            cell.className = cls;
        });
    });
}

drawMain();
drawVolume();
drawMacd();
drawNdb();
drawRsi();
drawCci();
drawTime();
fillTrades();
```
